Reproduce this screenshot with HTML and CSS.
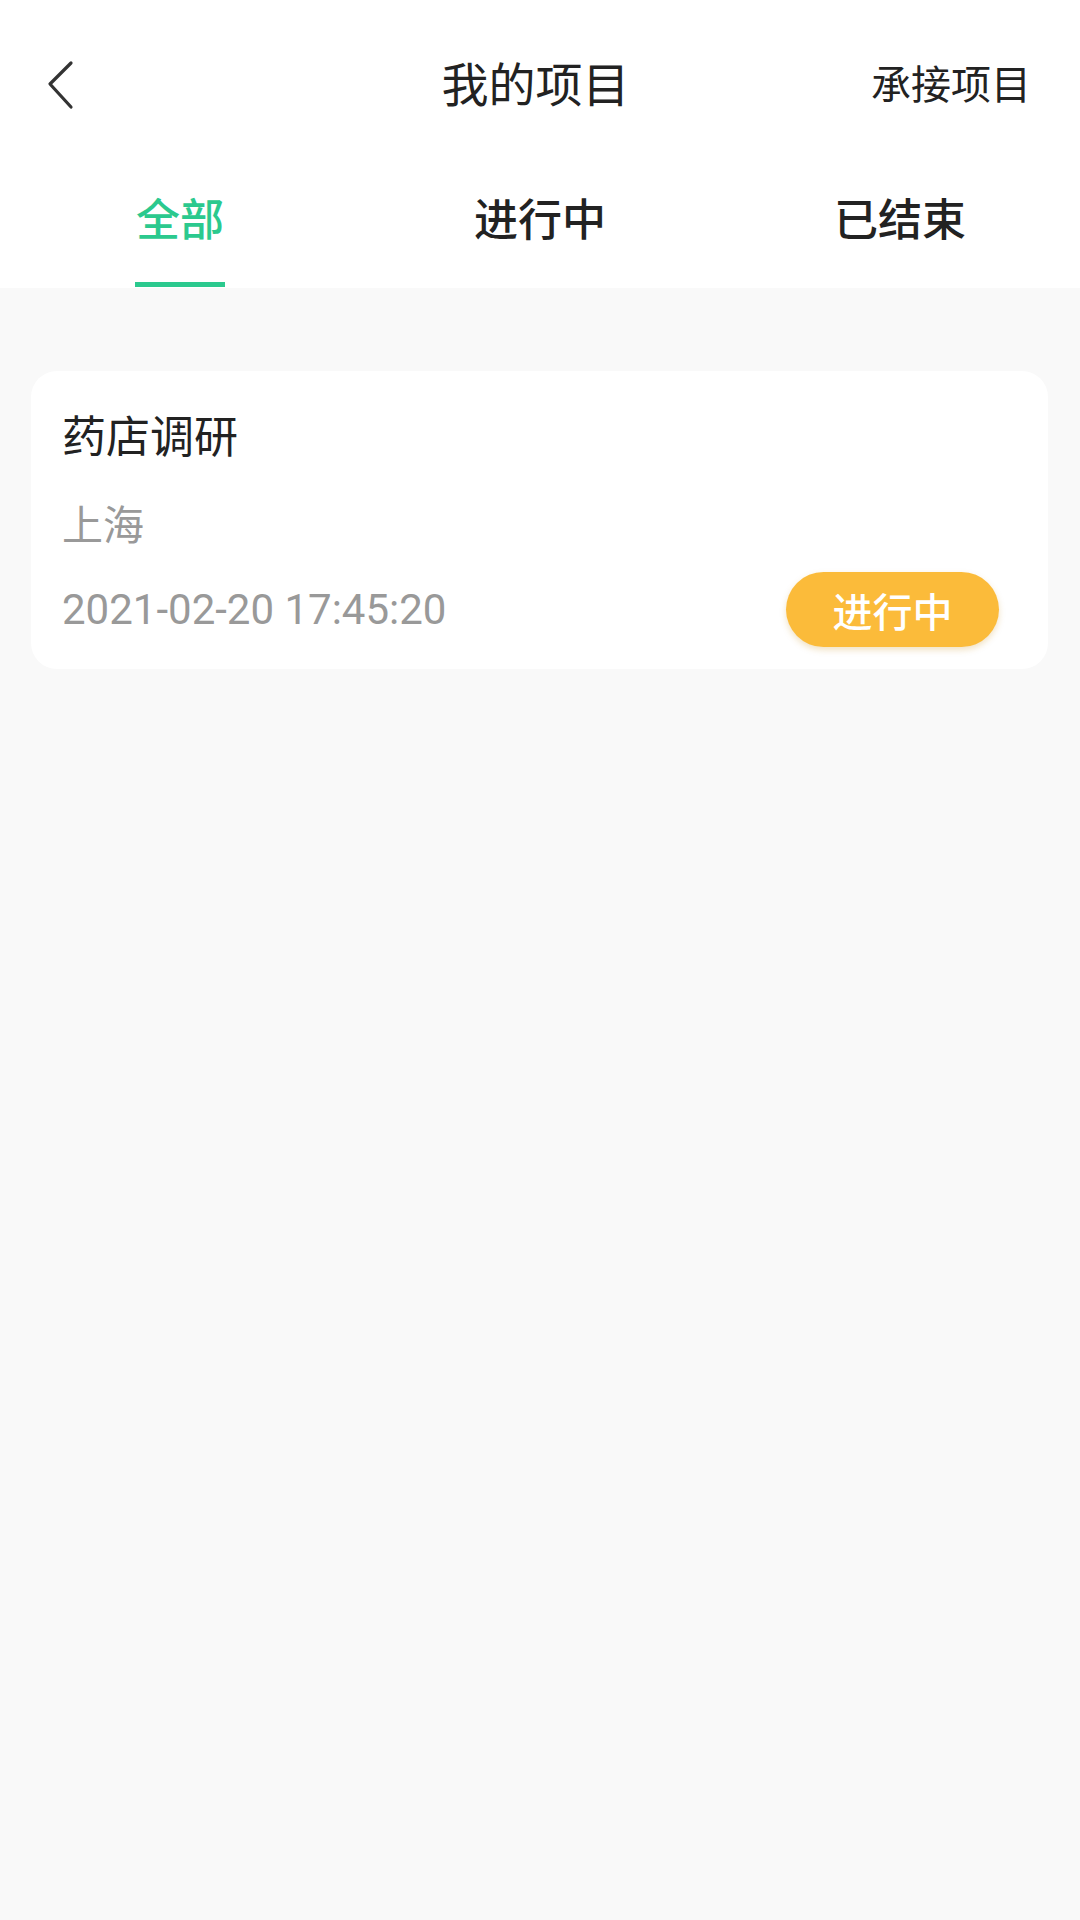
FILE: index.html
```html
<!DOCTYPE html>
<html lang="zh-CN">
<head>
<meta charset="utf-8">
<title>我的项目</title>
<link rel="stylesheet" href="styles.css">
</head>
<body>
<header class="header">
  <div class="navbar">
    <div class="nav-left">
      <svg class="back" width="40" height="60" viewBox="0 0 40 60">
        <polyline points="31,12 10,33 31,56" fill="none" stroke="#333" stroke-width="3.2" stroke-linecap="round" stroke-linejoin="round"/>
      </svg>
    </div>
    <div class="nav-title">我的项目</div>
    <div class="nav-right">承接项目</div>
  </div>
  <div class="tabs">
    <div class="tab active"><span class="tab-text">全部</span><span class="tab-line"></span></div>
    <div class="tab"><span class="tab-text">进行中</span><span class="tab-line"></span></div>
    <div class="tab"><span class="tab-text">已结束</span><span class="tab-line"></span></div>
  </div>
</header>
<main class="list">
  <div class="card">
    <div class="card-title">药店调研</div>
    <div class="card-city">上海</div>
    <div class="card-row">
      <div class="card-date">2021-02-20 17:45:20</div>
      <div class="badge">进行中</div>
    </div>
  </div>
</main>
</body>
</html>
```
FILE: styles.css
```css
* { box-sizing: border-box; }
html, body {
  margin: 0;
  padding: 0;
}
body {
  width: 1080px;
  min-height: 1920px;
  background: #f9f9f9;
  font-family: "Noto Sans CJK SC", "Noto Sans", sans-serif;
  color: #222;
}
.header {
  background: #ffffff;
  height: 288px;
}
.navbar {
  height: 172px;
  display: grid;
  grid-template-columns: 1fr auto 1fr;
  align-items: center;
  padding: 0 49px 8px 40px;
}
.nav-left {
  display: flex;
  align-items: center;
}
.back { display: block; margin-top: -2px; }
.nav-title {
  font-size: 47px;
  line-height: 60px;
  color: #222;
}
.nav-right {
  justify-self: end;
  font-size: 40px;
  line-height: 60px;
  color: #222;
}
.tabs {
  height: 116px;
  display: grid;
  grid-template-columns: repeat(3, 1fr);
}
.tab {
  display: flex;
  flex-direction: column;
  align-items: center;
  padding-top: 15px;
}
.tab-text {
  font-size: 44px;
  line-height: 60px;
  font-weight: 500;
  color: #222;
}
.tab-line {
  margin-top: auto;
  margin-bottom: 1px;
  width: 90px;
  height: 5px;
  background: transparent;
}
.tab.active .tab-text { color: #2bc98e; }
.tab.active .tab-line { background: #2bc98e; }

.list {
  padding: 83px 32px 0 31px;
}
.card {
  background: #ffffff;
  border-radius: 26px;
  padding: 33px 49px 22px 31px;
}
.card-title {
  font-size: 44px;
  line-height: 60px;
  color: #222;
}
.card-city {
  margin-top: 28px;
  font-size: 41px;
  line-height: 60px;
  color: #999;
}
.card-row {
  margin-top: 20px;
  display: flex;
  align-items: center;
  justify-content: space-between;
  height: 75px;
}
.card-date {
  font-family: Roboto, "Noto Sans", sans-serif;
  font-size: 42px;
  color: #999;
}
.badge {
  width: 213px;
  height: 75px;
  border-radius: 38px;
  background: #fbbb3a;
  color: #ffffff;
  font-size: 40px;
  font-weight: 500;
  display: flex;
  align-items: center;
  justify-content: center;
  box-shadow: 0 3px 6px rgba(200, 140, 20, 0.25);
}
```
